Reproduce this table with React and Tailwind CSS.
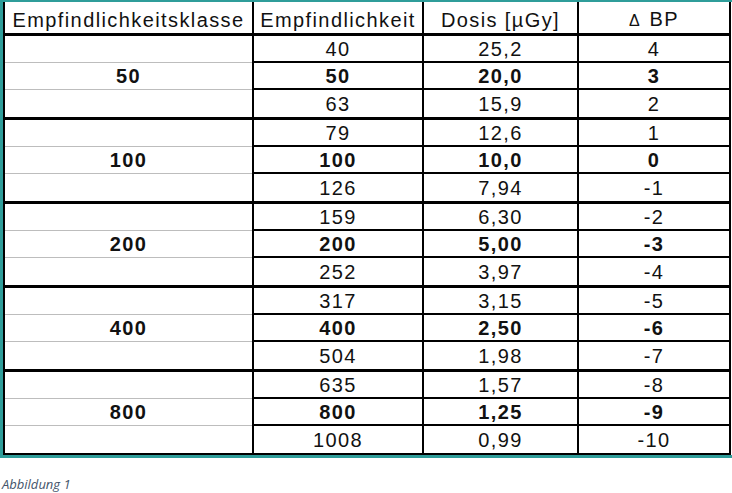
import React from "react";

const groups = [
  { k: "50", rows: [["40", "25,2", "4"], ["50", "20,0", "3"], ["63", "15,9", "2"]] },
  { k: "100", rows: [["79", "12,6", "1"], ["100", "10,0", "0"], ["126", "7,94", "-1"]] },
  { k: "200", rows: [["159", "6,30", "-2"], ["200", "5,00", "-3"], ["252", "3,97", "-4"]] },
  { k: "400", rows: [["317", "3,15", "-5"], ["400", "2,50", "-6"], ["504", "1,98", "-7"]] },
  { k: "800", rows: [["635", "1,57", "-8"], ["800", "1,25", "-9"], ["1008", "0,99", "-10"]] },
];

function Row({ klasse, values, mid, last }) {
  const weight = mid ? "font-bold" : "font-normal";
  const line = last ? "" : "border-b-2 border-black";
  return (
    <div className="flex h-[27px]">
      <div
        className={`w-[247px] flex items-center justify-center ${weight} ${
          last ? "" : "border-b-[1.5px] border-[#bdbdbd]"
        }`}
      >
        {klasse}
      </div>
      <div className={`w-[170px] border-l-2 border-l-black flex items-center justify-center ${weight} ${line}`}>
        {values[0]}
      </div>
      <div className={`w-[155px] border-l-2 border-l-black flex items-center justify-center ${weight} ${line}`}>
        {values[1]}
      </div>
      <div className={`w-[152px] border-l-2 border-l-black flex items-center justify-center ${weight} ${line}`}>
        {values[2]}
      </div>
    </div>
  );
}

export default function App() {
  return (
    <div className="w-[732px] bg-white">
      {/* teal frame, its right edge falls outside the crop */}
      <div className="w-[732px] border-t-2 border-l-[3px] border-b-[3px] border-[#2f9d9a]">
        <div
          className="w-[728px] border-l-2 border-r-2 border-b-2 border-black text-[20px] leading-5 tracking-[1.4px] text-[#111]"
          style={{ fontFamily: '"Liberation Sans", Arial, sans-serif' }}
        >
          {/* header */}
          <div className="flex h-[34px] border-b-[3px] border-black">
            <div className="w-[247px] flex items-center justify-center pt-1">Empfindlichkeitsklasse</div>
            <div className="w-[170px] border-l-2 border-black flex items-center justify-center pt-1">
              Empfindlichkeit
            </div>
            <div className="w-[155px] border-l-2 border-black flex items-center justify-center pt-1">
              Dosis [µGy]
            </div>
            <div className="w-[152px] border-l-2 border-black flex items-end justify-center pb-[4px]">
              <span className="text-[16px] leading-none mr-[10px] tracking-normal">Δ</span>
              <span className="leading-none">BP</span>
            </div>
          </div>

          {groups.map((g, gi) => (
            <div key={g.k} className={gi > 0 ? "border-t-[3px] border-black" : ""}>
              {g.rows.map((r, ri) => (
                <Row
                  key={ri}
                  klasse={ri === 1 ? g.k : ""}
                  values={r}
                  mid={ri === 1}
                  last={ri === 2}
                />
              ))}
            </div>
          ))}
        </div>
      </div>

      <p
        className="mt-[18px] ml-[2px] text-[13px] leading-4 italic text-[#44546a]"
        style={{ fontFamily: '"Open Sans", sans-serif' }}
      >
        Abbildung 1
      </p>
    </div>
  );
}
